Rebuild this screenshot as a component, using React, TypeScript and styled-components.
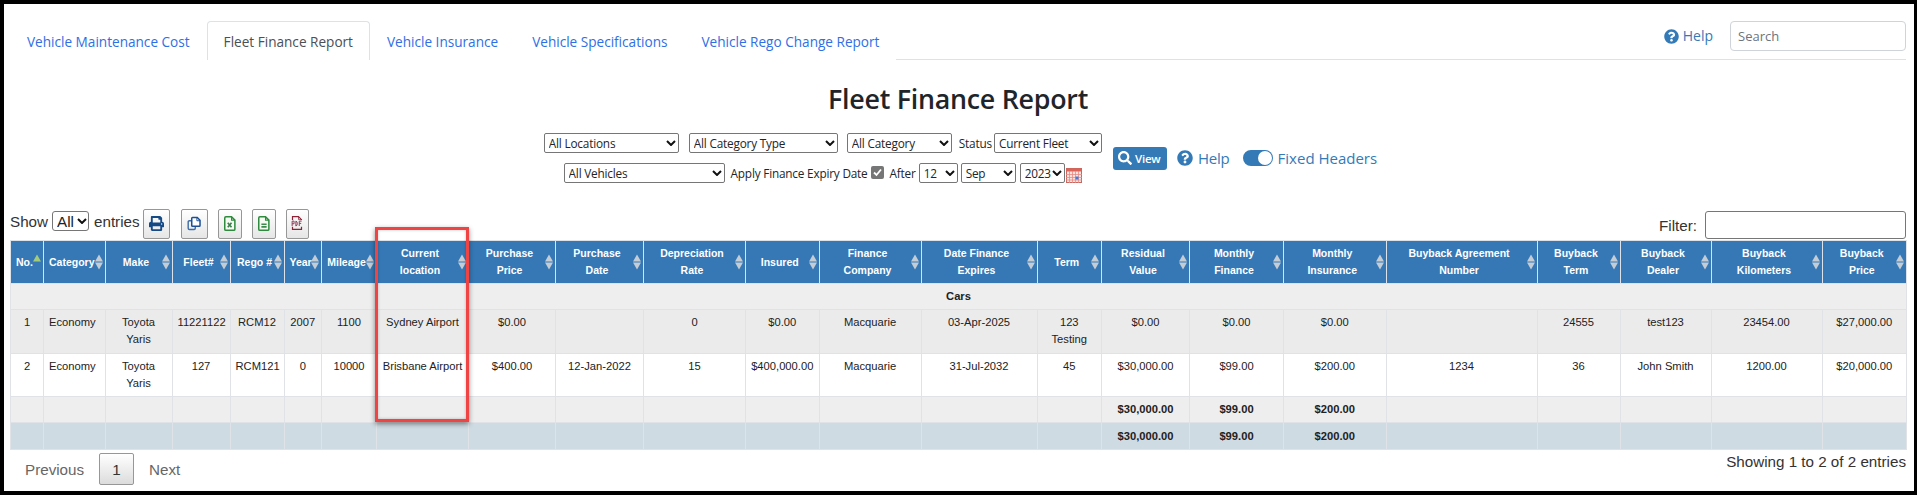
import React from 'react';
import styled, { createGlobalStyle } from 'styled-components';
import { FaPrint, FaSearch, FaQuestionCircle } from 'react-icons/fa';

const GlobalStyle = createGlobalStyle`
  html, body {
    margin: 0;
    padding: 0;
    background: #000;
    overflow: hidden;
  }
  * {
    box-sizing: border-box;
  }
`;

const uiFont = '"Open Sans", "Noto Sans", sans-serif';
const tableFont = '"Liberation Sans", Arial, sans-serif';

const chevron = `url("data:image/svg+xml,%3Csvg xmlns='http://www.w3.org/2000/svg' width='10' height='6' viewBox='0 0 10 6'%3E%3Cpath d='M1 1l4 4 4-4' fill='none' stroke='%23111' stroke-width='2'/%3E%3C/svg%3E")`;
const tick = `url("data:image/svg+xml,%3Csvg xmlns='http://www.w3.org/2000/svg' width='13' height='13' viewBox='0 0 13 13'%3E%3Cpath d='M3 6.5l2.5 2.5 4.5-5.5' fill='none' stroke='%23fff' stroke-width='1.8'/%3E%3C/svg%3E")`;

const Frame = styled.div`
  margin: 4px 3px 4px 4px;
  height: 487px;
  padding: 0 8px 0 6px;
  background: #fff;
  overflow: hidden;
  font-family: ${uiFont};
  color: #212529;
`;

const TabBar = styled.div`
  display: flex;
  justify-content: space-between;
  height: 56px;
  padding-top: 17px;
  border-bottom: 1px solid #dee2e6;
`;

const Tabs = styled.div`
  display: flex;
  height: 39px;
`;

const Tab = styled.div<{ $active?: boolean }>`
  display: flex;
  align-items: center;
  padding: 0 16px;
  font-size: 13.6px;
  color: ${props => (props.$active ? '#495057' : '#2f6fe4')};
  background: #fff;
  border: 1px solid ${props => (props.$active ? '#dee2e6' : 'transparent')};
  border-bottom: 0;
  border-radius: 4px 4px 0 0;
`;

const TopRight = styled.div`
  display: flex;
  align-items: flex-start;
  gap: 17px;
`;

const HelpLink = styled.a<{ $large?: boolean }>`
  display: flex;
  align-items: center;
  gap: ${props => (props.$large ? '5px' : '4px')};
  font-size: ${props => (props.$large ? '15px' : '14px')};
  letter-spacing: ${props => (props.$large ? '-0.2px' : '0')};
  color: #337ab7;
  line-height: 20px;
  margin-top: ${props => (props.$large ? '0' : '5px')};
`;

const SearchInput = styled.input`
  width: 176px;
  height: 30px;
  padding: 0 7px;
  font-family: ${uiFont};
  font-size: 13px;
  border: 1px solid #ced4da;
  border-radius: 4px;
  &::placeholder {
    color: #6c757d;
    opacity: 1;
  }
`;

const Title = styled.h1`
  margin: 0;
  height: 73px;
  padding-top: 19px;
  font-size: 26.8px;
  line-height: 40px;
  font-weight: 600;
  letter-spacing: -0.25px;
  text-align: center;
  color: #212529;
`;

const FilterArea = styled.div`
  display: flex;
  justify-content: center;
  align-items: center;
  height: 50px;
  padding-left: 5px;
`;

const FilterRows = styled.div`
  display: flex;
  flex-direction: column;
  align-items: center;
  gap: 10px;
`;

const FilterRow = styled.div`
  display: flex;
  align-items: center;
  height: 20px;
`;

const Dropdown = styled.select<{ $w: number; $mr?: number }>`
  width: ${props => props.$w}px;
  height: 20px;
  margin-right: ${props => props.$mr ?? 0}px;
  padding: 0 13px 0 4px;
  font-family: ${uiFont};
  font-size: 11.8px;
  letter-spacing: -0.2px;
  color: #212529;
  appearance: none;
  background: #fff ${chevron} no-repeat right 2px center;
  border: 1px solid #767676;
  border-radius: 2px;
`;

const FilterLabel = styled.span<{ $ml?: number; $mr?: number }>`
  margin-left: ${props => props.$ml ?? 0}px;
  margin-right: ${props => props.$mr ?? 0}px;
  font-size: 11.8px;
  letter-spacing: -0.2px;
  white-space: nowrap;
  color: #212529;
`;

const ExpiryCheck = styled.input`
  width: 13px;
  height: 13px;
  margin: 0 0 2px 3px;
  appearance: none;
  background: #767676 ${tick} no-repeat center;
  border-radius: 2px;
`;

const CalendarIcon = styled.svg`
  width: 16px;
  height: 16px;
  margin-left: 1px;
  margin-top: 4px;
`;

const ViewButton = styled.button`
  display: flex;
  align-items: center;
  gap: 3px;
  width: 54px;
  height: 23px;
  margin-left: 11px;
  margin-right: 10px;
  padding: 0 0 0 5px;
  font-family: ${uiFont};
  font-size: 11.5px;
  font-weight: 600;
  letter-spacing: -0.2px;
  color: #fff;
  background: #337ab7;
  border: 0;
  border-radius: 3px;
`;

const FixedHeaders = styled.div`
  display: flex;
  align-items: center;
  gap: 5px;
  margin-left: 13px;
  font-size: 15px;
  color: #337ab7;
`;

const Toggle = styled.span`
  display: flex;
  justify-content: flex-end;
  align-items: center;
  width: 30px;
  height: 16px;
  padding-right: 1px;
  background: #337ab7;
  border-radius: 8px;
`;

const ToggleKnob = styled.span`
  width: 14px;
  height: 14px;
  background: #fff;
  border-radius: 50%;
`;

const Toolbar = styled.div`
  display: flex;
  justify-content: space-between;
  align-items: flex-end;
  height: 31px;
  margin-top: 26px;
  font-family: ${tableFont};
  font-size: 15.2px;
  color: #333;
`;

const LengthGroup = styled.div`
  display: flex;
  align-items: flex-start;
  height: 31px;
`;

const ShowLabel = styled.span`
  margin-top: 3px;
  line-height: 20px;
`;

const LengthSelect = styled.select`
  width: 37px;
  height: 20px;
  margin: 2px 5px 0 4px;
  padding: 0 12px 0 4px;
  font-family: ${tableFont};
  font-size: 15.2px;
  color: #222;
  appearance: none;
  background: #fff ${chevron} no-repeat right 1px center;
  border: 1px solid #767676;
  border-radius: 3px;
`;

const ExportButton = styled.button<{ $w: number; $ml: number }>`
  display: flex;
  justify-content: center;
  align-items: center;
  width: ${props => props.$w}px;
  height: 30px;
  margin-left: ${props => props.$ml}px;
  padding: 0 0 2px;
  background: linear-gradient(#fff, #e6e6e6);
  border: 1px solid #979797;
  border-radius: 2px;
`;

const FilterGroup = styled.label`
  display: flex;
  align-items: center;
  gap: 8px;
  margin-bottom: 1px;
`;

const FilterInput = styled.input`
  width: 201px;
  height: 28px;
  background: #fff;
  border: 1px solid #767676;
  border-radius: 3px;
`;

const TableWrap = styled.div`
  position: relative;
`;

const Table = styled.table`
  width: 1896px;
  table-layout: fixed;
  border-collapse: collapse;
  font-family: ${tableFont};
  font-size: 11.2px;
  line-height: 17px;
  color: #222;
`;

const Col = styled.col<{ $w: number }>`
  width: ${props => props.$w}px;
`;

const HeadCell = styled.th`
  position: relative;
  height: 43px;
  padding: 0 10px 0 5px;
  font-size: 10.5px;
  font-weight: 700;
  text-align: center;
  color: #fff;
  background: #3578b5;
  border: 1px solid #dde2e8;
  border-bottom: 0;
`;

const SortArrows = styled.span`
  position: absolute;
  top: 50%;
  right: 2px;
  display: flex;
  flex-direction: column;
  gap: 1px;
  transform: translateY(-50%);
`;

const SortUp = styled.span<{ $on?: boolean }>`
  width: 0;
  height: 0;
  border-left: 4px solid transparent;
  border-right: 4px solid transparent;
  border-bottom: 7px solid ${props => (props.$on ? '#a3cb7a' : '#c4ccd6')};
`;

const SortDown = styled.span<{ $hide?: boolean }>`
  width: 0;
  height: 0;
  border-left: 4px solid transparent;
  border-right: 4px solid transparent;
  border-top: 7px solid ${props => (props.$hide ? 'transparent' : '#c4ccd6')};
`;

const Row = styled.tr<{ $bg: string; $h: number }>`
  height: ${props => props.$h}px;
  background: ${props => props.$bg};
`;

const Cell = styled.td<{ $left?: boolean; $bold?: boolean; $mid?: boolean }>`
  padding: ${props => (props.$mid ? '0 5px' : '4px 5px 3px')};
  vertical-align: ${props => (props.$mid ? 'middle' : 'top')};
  text-align: ${props => (props.$left ? 'left' : 'center')};
  font-weight: ${props => (props.$bold ? 700 : 400)};
  border: 1px solid #dfe2e7;
`;

const GroupCell = styled.td`
  padding: 0;
  font-weight: 700;
  text-align: center;
  border: 1px solid #dfe2e7;
`;

const Highlight = styled.div`
  position: absolute;
  top: -13px;
  left: 365px;
  width: 94px;
  height: 195px;
  border: 3px solid #f04444;
  box-shadow: 0 2px 5px rgba(0, 0, 0, 0.45), inset 0 0 3px rgba(0, 0, 0, 0.25);
  pointer-events: none;
`;

const Footer = styled.div`
  display: flex;
  justify-content: space-between;
  align-items: flex-start;
  margin-top: 3px;
  font-family: ${tableFont};
  font-size: 15.2px;
  color: #333;
`;

const Pagination = styled.div`
  display: flex;
  align-items: center;
  height: 32px;
  padding-left: 15px;
  color: #666;
`;

const PageButton = styled.span`
  display: flex;
  justify-content: center;
  align-items: center;
  width: 35px;
  height: 32px;
  margin: 0 15px;
  color: #333;
  background: linear-gradient(#fff, #dcdcdc);
  border: 1px solid #979797;
  border-radius: 2px;
`;

const InfoText = styled.span`
  line-height: 18px;
`;

const columns = [
  { label: 'No.', w: 33 },
  { label: 'Category', w: 61.5 },
  { label: 'Make', w: 67 },
  { label: 'Fleet#', w: 58 },
  { label: 'Rego #', w: 54 },
  { label: 'Year', w: 37.5 },
  { label: 'Mileage', w: 55 },
  { label: 'Current location', w: 92 },
  { label: 'Purchase Price', w: 87 },
  { label: 'Purchase Date', w: 88 },
  { label: 'Depreciation Rate', w: 102 },
  { label: 'Insured', w: 73.5 },
  { label: 'Finance Company', w: 102 },
  { label: 'Date Finance Expires', w: 116 },
  { label: 'Term', w: 64.5 },
  { label: 'Residual Value', w: 88 },
  { label: 'Monthly Finance', w: 94 },
  { label: 'Monthly Insurance', w: 102.5 },
  { label: 'Buyback Agreement Number', w: 151 },
  { label: 'Buyback Term', w: 83 },
  { label: 'Buyback Dealer', w: 91 },
  { label: 'Buyback Kilometers', w: 111 },
  { label: 'Buyback Price', w: 84.5 },
];

const rows = [
  {
    bg: '#ebebeb',
    h: 44,
    cells: ['1', 'Economy', 'Toyota Yaris', '11221122', 'RCM12', '2007', '1100', 'Sydney Airport', '$0.00', '', '0', '$0.00', 'Macquarie', '03-Apr-2025', '123 Testing', '$0.00', '$0.00', '$0.00', '', '24555', 'test123', '23454.00', '$27,000.00'],
  },
  {
    bg: '#ffffff',
    h: 43,
    cells: ['2', 'Economy', 'Toyota Yaris', '127', 'RCM121', '0', '10000', 'Brisbane Airport', '$400.00', '12-Jan-2022', '15', '$400,000.00', 'Macquarie', '31-Jul-2032', '45', '$30,000.00', '$99.00', '$200.00', '1234', '36', 'John Smith', '1200.00', '$20,000.00'],
  },
];

const totals = [
  { bg: '#eeeeee', h: 26 },
  { bg: '#cfdbe3', h: 27 },
];

const totalCells: Record<number, string> = {
  15: '$30,000.00',
  16: '$99.00',
  17: '$200.00',
};

const CopyIcon = () => (
  <svg width="15" height="15" viewBox="0 0 19 19" fill="none">
    <path d="M6 6H3a1.5 1.5 0 0 0-1.5 1.5v8A1.5 1.5 0 0 0 3 17h6a1.5 1.5 0 0 0 1.5-1.5V13" stroke="#3f6ea6" strokeWidth="1.8" />
    <path d="M7 2h6l3.5 3.5V12a1 1 0 0 1-1 1H7a1 1 0 0 1-1-1V3a1 1 0 0 1 1-1z" stroke="#1c4f96" strokeWidth="1.9" fill="#fff" />
    <path d="M12.5 2v4h4" stroke="#1c4f96" strokeWidth="1.2" />
  </svg>
);

const SheetIcon = ({ kind }: { kind: 'xls' | 'csv' }) => (
  <svg width="12" height="15" viewBox="0 0 16 20" fill="none">
    <path d="M2.5 1h7.5l4.5 4.5V17.5a1.5 1.5 0 0 1-1.5 1.5H2.5A1.5 1.5 0 0 1 1 17.5v-15A1.5 1.5 0 0 1 2.5 1z" stroke="#2e8b3e" strokeWidth="2" fill="#f5fbf2" />
    <path d="M10 1v4.5h4.5" stroke="#2e8b3e" strokeWidth="1.4" />
    {kind === 'xls' ? (
      <path d="M5 9l5 6M10 9l-5 6" stroke="#3d7d4c" strokeWidth="2.2" />
    ) : (
      <path d="M4.5 11h7M4.5 14.5h7" stroke="#3d8a4c" strokeWidth="2.2" />
    )}
  </svg>
);

const PdfIcon = () => (
  <svg width="12" height="16" viewBox="0 0 16 20" fill="none">
    <path d="M2 6V1.5h8l4 4V6" stroke="#8c2238" strokeWidth="1.6" />
    <path d="M10 1.5v4h4" stroke="#8c2238" strokeWidth="1" />
    <path d="M2 15v3.5h12V15" stroke="#8c2238" strokeWidth="1.6" />
    <path d="M1.5 14V7.5h2.6v3.5H1.5M6.5 7.5V14M6.5 7.5c2.6 0 2.6 6.5 0 6.5M11 14V7.5h3.2M11 10.5h2.6" stroke="#8a3a55" strokeWidth="1.3" />
  </svg>
);

export default function App() {
  return (
    <>
      <GlobalStyle />
      <Frame>
        <TabBar>
          <Tabs>
            <Tab>Vehicle Maintenance Cost</Tab>
            <Tab $active>Fleet Finance Report</Tab>
            <Tab>Vehicle Insurance</Tab>
            <Tab>Vehicle Specifications</Tab>
            <Tab>Vehicle Rego Change Report</Tab>
          </Tabs>
          <TopRight>
            <HelpLink>
              <FaQuestionCircle size={15} />
              Help
            </HelpLink>
            <SearchInput placeholder="Search" />
          </TopRight>
        </TabBar>

        <Title>Fleet Finance Report</Title>

        <FilterArea>
          <FilterRows>
            <FilterRow>
              <Dropdown $w={135} $mr={10}><option>All Locations</option></Dropdown>
              <Dropdown $w={149} $mr={9}><option>All Category Type</option></Dropdown>
              <Dropdown $w={105} $mr={7}><option>All Category</option></Dropdown>
              <FilterLabel $mr={2}>Status</FilterLabel>
              <Dropdown $w={108}><option>Current Fleet</option></Dropdown>
            </FilterRow>
            <FilterRow>
              <Dropdown $w={161} $mr={6}><option>All Vehicles</option></Dropdown>
              <FilterLabel>Apply Finance Expiry Date</FilterLabel>
              <ExpiryCheck type="checkbox" checked readOnly />
              <FilterLabel $ml={6} $mr={3}>After</FilterLabel>
              <Dropdown $w={39} $mr={3}><option>12</option></Dropdown>
              <Dropdown $w={55.5} $mr={3.5}><option>Sep</option></Dropdown>
              <Dropdown $w={45.5}><option>2023</option></Dropdown>
              <CalendarIcon viewBox="0 0 16 16">
                <rect x="0.5" y="1.5" width="15" height="14" fill="#fbe4e0" stroke="#c7675f" />
                <rect x="0.5" y="1.5" width="15" height="3" fill="#d9645a" />
                <path d="M0 7.5h16M0 10.5h16M0 13h16M3.5 4v12M6.5 4v12M9.5 4v12M12.5 4v12" stroke="#e58c84" strokeWidth="0.8" />
                <rect x="9.5" y="9.5" width="3" height="3" fill="#4a78d8" />
              </CalendarIcon>
            </FilterRow>
          </FilterRows>
          <ViewButton>
            <FaSearch size={14} />
            View
          </ViewButton>
          <HelpLink $large>
            <FaQuestionCircle size={16} />
            Help
          </HelpLink>
          <FixedHeaders>
            <Toggle><ToggleKnob /></Toggle>
            Fixed Headers
          </FixedHeaders>
        </FilterArea>

        <Toolbar>
          <LengthGroup>
            <ShowLabel>Show</ShowLabel>
            <LengthSelect><option>All</option></LengthSelect>
            <ShowLabel>entries</ShowLabel>
            <ExportButton $w={27} $ml={3}><FaPrint size={15} color="#164a86" /></ExportButton>
            <ExportButton $w={27} $ml={11}><CopyIcon /></ExportButton>
            <ExportButton $w={24} $ml={10}><SheetIcon kind="xls" /></ExportButton>
            <ExportButton $w={24} $ml={10}><SheetIcon kind="csv" /></ExportButton>
            <ExportButton $w={23} $ml={10}><PdfIcon /></ExportButton>
          </LengthGroup>
          <FilterGroup>
            Filter:
            <FilterInput />
          </FilterGroup>
        </Toolbar>

        <TableWrap>
          <Table>
            <colgroup>
              {columns.map(col => <Col key={col.label} $w={col.w} />)}
            </colgroup>
            <thead>
              <tr>
                {columns.map((col, i) => (
                  <HeadCell key={col.label}>
                    {col.label}
                    <SortArrows>
                      <SortUp $on={i === 0} />
                      <SortDown $hide={i === 0} />
                    </SortArrows>
                  </HeadCell>
                ))}
              </tr>
            </thead>
            <tbody>
              <Row $bg="#eeeeee" $h={26}>
                <GroupCell colSpan={columns.length}>Cars</GroupCell>
              </Row>
              {rows.map(row => (
                <Row key={row.cells[0]} $bg={row.bg} $h={row.h}>
                  {row.cells.map((text, i) => (
                    <Cell key={i} $left={i === 1}>{text}</Cell>
                  ))}
                </Row>
              ))}
              {totals.map(total => (
                <Row key={total.bg} $bg={total.bg} $h={total.h}>
                  {columns.map((col, i) => (
                    <Cell key={col.label} $bold $mid>{totalCells[i] ?? ''}</Cell>
                  ))}
                </Row>
              ))}
            </tbody>
          </Table>
          <Highlight />
        </TableWrap>

        <Footer>
          <Pagination>
            Previous
            <PageButton>1</PageButton>
            Next
          </Pagination>
          <InfoText>Showing 1 to 2 of 2 entries</InfoText>
        </Footer>
      </Frame>
    </>
  );
}
